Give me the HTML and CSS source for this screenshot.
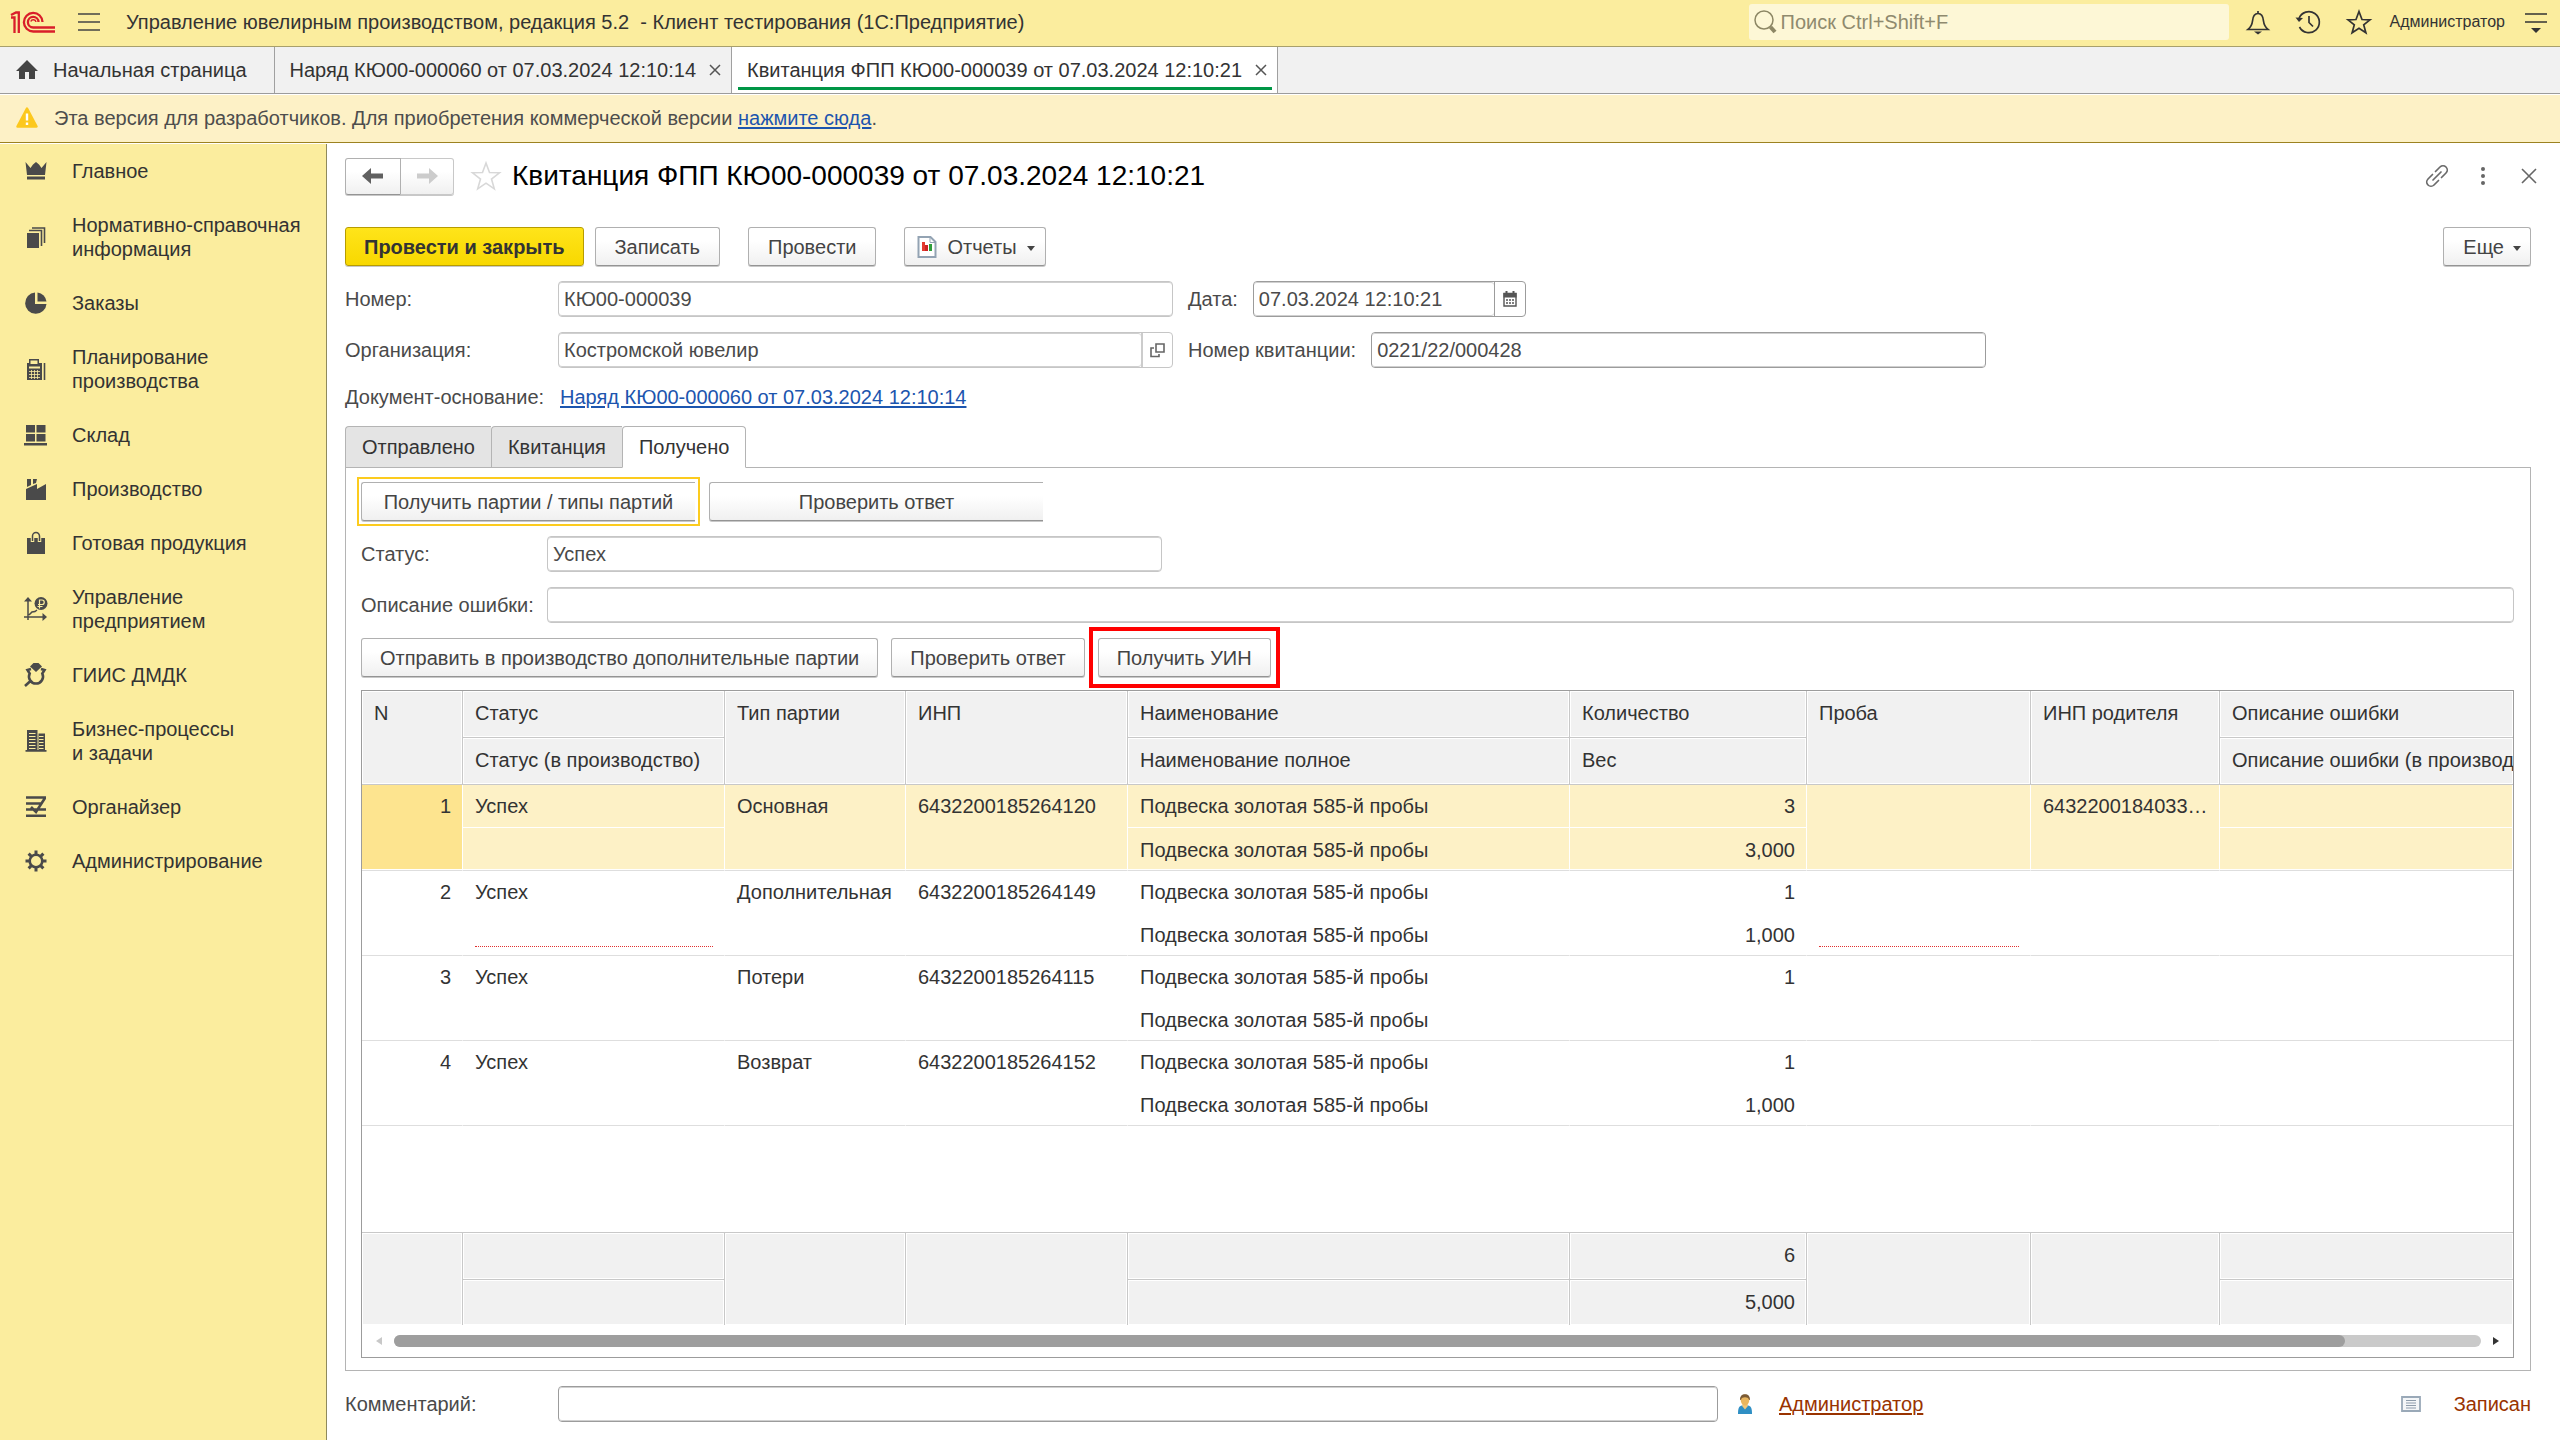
FILE: index.html
```html
<!DOCTYPE html>
<html lang="ru">
<head>
<meta charset="utf-8">
<title>Управление ювелирным производством, редакция 5.2</title>
<link rel="stylesheet" href="styles.css">
</head>
<body>
<header class="topbar">
  <svg class="logo" width="45" height="23" viewBox="0 0 45 23" fill="none" stroke="#d91e2a" stroke-width="2.300">
    <path d="M0 6.500h3.500V22M0 4L5 1.500h2.800V22" />
    <path d="M31.500 11a9.300 9.300 0 1 0-9.300 9.500H44M27.500 11a5.300 5.300 0 1 0-5.300 5.500H44" />
    <path d="M25 11a2.700 2.700 0 0 0-5.200-.5" stroke-width="1.500" />
  </svg>
  <button class="icon-btn burger" aria-label="Меню"><svg width="24" height="20" viewBox="0 0 24 20" stroke="#444" stroke-width="1.500"><path d="M1 2h22M1 10h22M1 18h22" /></svg></button>
  <span class="app-title">Управление ювелирным производством, редакция 5.2 &nbsp;- Клиент тестирования (1С:Предприятие)</span>
  <label class="search">
    <svg width="24" height="26" viewBox="0 0 24 26" fill="none" stroke="#8d8765"><circle cx="11" cy="11" r="9" stroke-width="1.500" /><path d="M17.500 18l4.500 5" stroke-width="4" /></svg>
    <input type="text" placeholder="Поиск Ctrl+Shift+F" aria-label="Поиск">
  </label>
  <div class="top-icons">
    <button class="icon-btn" aria-label="Уведомления"><svg width="24" height="26" viewBox="0 0 24 26" fill="none" stroke="#333" stroke-width="1.700"><path d="M12 2v2.500M2 20.500h20c-3-2.500-4-4-4.500-8.500-.4-4.500-2-7.500-5.500-7.500S6.900 7.500 6.500 12C6 16.500 5 18 2 20.500z" /><path d="M8 22.500h8l-4 3z" fill="#333" stroke="none" /></svg></button>
    <button class="icon-btn" aria-label="История"><svg width="26" height="26" viewBox="0 0 26 26" fill="none" stroke="#333" stroke-width="1.700"><path d="M4 9.500A10.500 10.500 0 1 1 4.500 18M14 7v6.500l4 4" /><path d="M.5 8.500l7.500.5-4 4z" fill="#333" stroke="none" /></svg></button>
    <button class="icon-btn" aria-label="Избранное"><svg width="26" height="26" viewBox="0 0 26 26" fill="none" stroke="#333" stroke-width="1.700"><path d="M13 2.500l3 8 8 .3-6.300 5 2.200 8L13 19.300l-6.900 4.500 2.200-8L2 10.800l8-.3z" /></svg></button>
  </div>
  <a class="user" href="#">Администратор</a>
  <button class="icon-btn" aria-label="Сервис"><svg width="24" height="22" viewBox="0 0 24 22" stroke="#333" stroke-width="1.700"><path d="M1 3h22M1 11h22" /><path d="M7 17h10l-5 5z" fill="#333" stroke="none" /></svg></button>
</header>

<nav class="tabs">
  <a class="tab home" href="#"><svg width="22" height="20" viewBox="0 0 22 20" fill="#444"><path d="M11 0L0 11h3v8h6v-7h4v7h6v-8h3z" /></svg>Начальная страница</a>
  <div class="tab"><a href="#">Наряд КЮ00-000060 от 07.03.2024 12:10:14</a><button class="icon-btn" aria-label="Закрыть"><svg width="12" height="12" viewBox="0 0 12 12" stroke="#555" stroke-width="1.500"><path d="M1 1l10 10M11 1L1 11" /></svg></button></div>
  <div class="tab active"><a href="#">Квитанция ФПП КЮ00-000039 от 07.03.2024 12:10:21</a><button class="icon-btn" aria-label="Закрыть"><svg width="12" height="12" viewBox="0 0 12 12" stroke="#555" stroke-width="1.500"><path d="M1 1l10 10M11 1L1 11" /></svg></button></div>
</nav>

<div class="notice">
  <svg width="22" height="21" viewBox="0 0 22 21"><path d="M11 1.500L20.500 19.500h-19z" fill="#fcc81e" stroke="#fcc81e" stroke-width="2.500" stroke-linejoin="round" /><path d="M11 6.500v7M11 15.500v2.500" stroke="#fff" stroke-width="2.400" /></svg>
  <p>Эта версия для разработчиков. Для приобретения коммерческой версии <a class="link" href="#">нажмите сюда</a>.</p>
</div>

<div class="workspace">
  <nav class="sidebar">
    <a href="#"><svg viewBox="0 0 24 24"><path d="M1.500 3l5 6L9 5.500 12 3l3 2.500L17.500 9l5-6L21 16H3zM3 17.500h18v3H3z" /></svg><span>Главное</span></a>
    <a href="#"><svg viewBox="0 0 24 24"><path d="M3 8h12v15H3z" /><path d="M5 5.500h12.500V21M8 3h12.500v15" fill="none" stroke="#4a4a4a" stroke-width="1.600" /></svg><span>Нормативно-справочная информация</span></a>
    <a href="#"><svg viewBox="0 0 24 24"><path d="M11 1.500V13h11.500A10.700 10.700 0 1 1 11 1.500z" /><path d="M13.500 1.500a10 10 0 0 1 9 9h-9z" /></svg><span>Заказы</span></a>
    <a href="#"><svg viewBox="0 0 24 24"><path d="M3 6h2V2h10v4h3v17H3zM6.500 3.500V7h7V3.500zM5 9.500v2h11v-2z" fill-rule="evenodd" /><path d="M5 14.500h11M5 17.500h11M5 20.500h11M7.500 13v9M10.500 13v9M13.500 13v9" stroke="#fbed9e" stroke-width=".8" /><path d="M20.500 6v17" stroke="#4a4a4a" stroke-width="1.600" /></svg><span>Планирование производства</span></a>
    <a href="#"><svg viewBox="0 0 24 24"><path d="M2 2h9v7.500H2zM12.500 2h9v7.500h-9zM2 11h9v7.500H2zM12.500 11h9v7.500h-9zM0 20h23v2.500H0z" /></svg><span>Склад</span></a>
    <a href="#"><svg viewBox="0 0 24 24"><path d="M2 12l11-5v5l9-5v16H2zM3 2h4v6l-4 2zM9 2h4l-1 4-3 1z" /></svg><span>Производство</span></a>
    <a href="#"><svg viewBox="0 0 24 24"><path d="M3 7h18v16H3z" /><path d="M8.500 11V5a3.500 3.500 0 0 1 7 0v6" fill="none" stroke="#fbed9e" stroke-width="3.500" /><path d="M8.500 10V5a3.500 3.500 0 0 1 7 0v5" fill="none" stroke="#4a4a4a" stroke-width="1.500" /></svg><span>Готовая продукция</span></a>
    <a href="#"><svg viewBox="0 0 24 24"><path d="M4 0l4 4.500H0zM23 20l-4.500-4v8z" /><circle cx="17" cy="6.500" r="6.500" /><path d="M4 3v20M0 20h20M5 18l3-3 3-.5 2-1.500" fill="none" stroke="#4a4a4a" stroke-width="1.500" /><path d="M15.500 11.500V3H18a2.200 2.200 0 0 1 0 4.500h-4M13.500 9.500h5" fill="none" stroke="#fbed9e" stroke-width="1.200" /></svg><span>Управление предприятием</span></a>
    <a href="#"><svg viewBox="0 0 24 24"><path d="M9.500 0h5L18 3.500 12 9 6 3.500z" /><path d="M7 6L3.500 7l2.200 3.500a7 7 0 1 0 12.600 0L20.500 7 17 6M7 17.500L1 23" fill="none" stroke="#4a4a4a" stroke-width="2.600" /></svg><span>ГИИС ДМДК</span></a>
    <a href="#"><svg viewBox="0 0 24 24"><path d="M3 1h10.500v21H3zM14.500 4.500H21V22h-6.500zM1.500 21h21v1.800h-21z" /><path d="M5 4.500h6.500M5 7.500h6.500M5 10.500h6.500M5 13.500h6.500M5 16.500h6.500M5 19.500h6.500M15 7.500h4.500M15 10.500h4.500M15 13.500h4.500M15 16.500h4.500M15 19.500h4.500" stroke="#fbed9e" stroke-width="1" /></svg><span>Бизнес-процессы и&nbsp;задачи</span></a>
    <a href="#"><svg viewBox="0 0 24 24"><path d="M2 2.500h20M2 8.500h15M2 14.500h20M2 20.800h20M21 3l-9 14-5-5" fill="none" stroke="#4a4a4a" stroke-width="2.600" /></svg><span>Органайзер</span></a>
    <a href="#"><svg viewBox="0 0 24 24"><circle cx="12" cy="12" r="6.300" fill="none" stroke="#4a4a4a" stroke-width="2.600" /><path d="M12 1.500v4M12 18.500v4M1.500 12h4M18.500 12h4M4.600 4.600l2.800 2.800M16.600 16.600l2.800 2.800M4.600 19.400l2.800-2.800M16.600 7.400l2.800-2.800" stroke="#4a4a4a" stroke-width="3" /></svg><span>Администрирование</span></a>
  </nav>

  <main class="doc">
    <div class="doc-head">
      <div class="nav-pair">
        <button class="btn" aria-label="Назад"><svg width="22" height="18" viewBox="0 0 22 18" fill="#606060"><path d="M9 1v5.500h12v5H9V17L0 9z" /></svg></button>
        <button class="btn forward" aria-label="Вперед"><svg width="22" height="18" viewBox="0 0 22 18" fill="#ccc"><path d="M13 1v5.500H1v5h12V17l9-8z" /></svg></button>
      </div>
      <button class="icon-btn fav" aria-label="В избранное"><svg width="30" height="30" viewBox="0 0 30 30" fill="none" stroke="#d8d8d8" stroke-width="1.600"><path d="M15 2l3.500 9.500 10 .3-8 6.200 2.800 9.800L15 22.200l-8.300 5.600L9.500 18l-8-6.200 10-.3z" /></svg></button>
      <h1>Квитанция ФПП КЮ00-000039 от 07.03.2024 12:10:21</h1>
      <div class="head-tools">
        <button class="icon-btn" aria-label="Ссылка"><svg width="24" height="24" viewBox="0 0 24 24" fill="none" stroke="#6a6a6a" stroke-width="1.700" stroke-linecap="round"><path d="M8 16l8-8M10.500 7.500l4.500-4.500a4.200 4.200 0 0 1 6 6L16.500 13.500M13.500 16.500L9 21a4.200 4.200 0 0 1-6-6L7.500 10.500" /></svg></button>
        <button class="icon-btn" aria-label="Действия"><svg width="24" height="24" viewBox="0 0 24 24" fill="#666"><circle cx="12" cy="5" r="2" /><circle cx="12" cy="12" r="2" /><circle cx="12" cy="19" r="2" /></svg></button>
        <button class="icon-btn close" aria-label="Закрыть"><svg width="16" height="16" viewBox="0 0 16 16" stroke="#666" stroke-width="1.600"><path d="M1 1l14 14M15 1L1 15" /></svg></button>
      </div>
    </div>

    <div class="commands">
      <button class="btn primary">Провести и закрыть</button>
      <button class="btn">Записать</button>
      <button class="btn spaced">Провести</button>
      <button class="btn spaced reports"><svg width="20" height="22" viewBox="0 0 20 22"><path d="M1.500 1h12l5 5v15h-17z" fill="#fff" stroke="#93a3b3" stroke-width="2" /><path d="M13 1v5.500h5" fill="none" stroke="#93a3b3" /><path d="M5 6h3v9H5z" fill="#e23b30" /><path d="M8 9h3v6H8z" fill="#c22" /><path d="M12 8h3v7h-3z" fill="#2f9e3c" /></svg>Отчеты<span class="caret"></span></button>
      <button class="btn more">Еще<span class="caret"></span></button>
    </div>

    <div class="field-row">
      <label class="lead" for="num">Номер:</label>
      <div class="field wide"><input id="num" type="text" value="КЮ00-000039" readonly></div>
      <label for="date">Дата:</label>
      <div class="field date edit"><input id="date" type="text" value="07.03.2024 12:10:21"><button aria-label="Календарь"><svg width="14" height="16" viewBox="0 0 14 16"><path d="M1 2.500h12V15H1z" fill="#fff" stroke="#555" stroke-width="1.400" /><path d="M.5 2h13v4.500H.5zM2.500 0h2v3h-2zM9.500 0h2v3h-2z" fill="#555" /><path d="M3 9h8M3 12h8" stroke="#555" stroke-width="1.600" stroke-dasharray="2 1" /></svg></button></div>
    </div>
    <div class="field-row">
      <label class="lead" for="org">Организация:</label>
      <div class="field wide"><input id="org" type="text" value="Костромской ювелир" readonly><button aria-label="Открыть"><svg width="15" height="15" viewBox="0 0 15 15" fill="none" stroke="#666" stroke-width="1.600"><path d="M6 1h8v8H6zM4 5H1v8.500h8V11" /></svg></button></div>
      <label for="rcp">Номер квитанции:</label>
      <div class="field wide edit"><input id="rcp" type="text" value="0221/22/000428"></div>
    </div>
    <div class="field-row base-doc">
      <span class="lead">Документ-основание:</span>
      <a class="link" href="#">Наряд КЮ00-000060 от 07.03.2024 12:10:14</a>
    </div>

    <section class="pages">
      <div class="page-tabs" role="tablist">
        <button role="tab">Отправлено</button>
        <button role="tab">Квитанция</button>
        <button role="tab" class="current" aria-selected="true">Получено</button>
      </div>
      <div class="page-body">
        <div class="line">
          <button class="btn half focused">Получить партии / типы партий</button>
          <button class="btn half">Проверить ответ</button>
        </div>
        <div class="field-row">
          <label class="lead" for="st">Статус:</label>
          <div class="field wide"><input id="st" type="text" value="Успех" readonly></div>
        </div>
        <div class="field-row">
          <label class="lead" for="err">Описание ошибки:</label>
          <div class="field full"><input id="err" type="text" readonly></div>
        </div>
        <div class="line">
          <button class="btn">Отправить в производство дополнительные партии</button>
          <button class="btn">Проверить ответ</button>
          <button class="btn marked">Получить УИН</button>
        </div>

        <div class="grid-box">
          <table>
            <colgroup><col class="c-n"><col class="c-status"><col class="c-type"><col class="c-inp"><col class="c-name"><col class="c-qty"><col class="c-probe"><col class="c-parent"><col></colgroup>
            <thead>
              <tr><th rowspan="2">N</th><th>Статус</th><th rowspan="2">Тип партии</th><th rowspan="2">ИНП</th><th>Наименование</th><th>Количество</th><th rowspan="2">Проба</th><th rowspan="2">ИНП родителя</th><th>Описание ошибки</th></tr>
              <tr><th>Статус (в производство)</th><th>Наименование полное</th><th>Вес</th><th>Описание ошибки (в производство)</th></tr>
            </thead>
            <tbody>
              <tr class="sel"><td class="num key" rowspan="2">1</td><td>Успех</td><td rowspan="2">Основная</td><td rowspan="2">6432200185264120</td><td>Подвеска золотая 585-й пробы</td><td class="num">3</td><td rowspan="2"></td><td rowspan="2">6432200184033…</td><td></td></tr>
              <tr class="sel sub"><td></td><td>Подвеска золотая 585-й пробы</td><td class="num">3,000</td><td></td></tr>
              <tr><td class="num" rowspan="2">2</td><td>Успех</td><td rowspan="2">Дополнительная</td><td rowspan="2">6432200185264149</td><td>Подвеска золотая 585-й пробы</td><td class="num">1</td><td class="required" rowspan="2"><span></span></td><td rowspan="2"></td><td></td></tr>
              <tr class="sub"><td class="required"><span></span></td><td>Подвеска золотая 585-й пробы</td><td class="num">1,000</td><td></td></tr>
              <tr><td class="num" rowspan="2">3</td><td>Успех</td><td rowspan="2">Потери</td><td rowspan="2">6432200185264115</td><td>Подвеска золотая 585-й пробы</td><td class="num">1</td><td rowspan="2"></td><td rowspan="2"></td><td></td></tr>
              <tr class="sub"><td></td><td>Подвеска золотая 585-й пробы</td><td class="num"></td><td></td></tr>
              <tr><td class="num" rowspan="2">4</td><td>Успех</td><td rowspan="2">Возврат</td><td rowspan="2">6432200185264152</td><td>Подвеска золотая 585-й пробы</td><td class="num">1</td><td rowspan="2"></td><td rowspan="2"></td><td></td></tr>
              <tr class="sub"><td></td><td>Подвеска золотая 585-й пробы</td><td class="num">1,000</td><td></td></tr>
              <tr class="blank"><td colspan="9"></td></tr>
            </tbody>
            <tfoot>
              <tr><td rowspan="2"></td><td></td><td rowspan="2"></td><td rowspan="2"></td><td></td><td class="num">6</td><td rowspan="2"></td><td rowspan="2"></td><td></td></tr>
              <tr class="last"><td></td><td></td><td class="num">5,000</td><td></td></tr>
            </tfoot>
          </table>
          <div class="scroll">
            <button class="icon-btn" aria-label="Влево"><svg width="6" height="8" viewBox="0 0 6 8" fill="#c8c8c8"><path d="M6 0v8L0 4z" /></svg></button>
            <div class="track"><div class="thumb"></div></div>
            <button class="icon-btn" aria-label="Вправо"><svg width="6" height="8" viewBox="0 0 6 8" fill="#333"><path d="M0 0v8l6-4z" /></svg></button>
          </div>
        </div>
      </div>
    </section>

    <div class="field-row bottom">
      <label class="lead" for="cmt">Комментарий:</label>
      <div class="field comment edit"><input id="cmt" type="text"></div>
      <svg class="person" width="16" height="20" viewBox="0 0 16 20"><path d="M1 20c0-6 1-8 4-8.500h6c3 .5 4 2.500 4 8.500z" fill="#2f8fc4" /><path d="M5.500 10h5v2.500L8 15.500l-2.500-3z" fill="#f3c777" /><ellipse cx="8" cy="6" rx="4.300" ry="5.500" fill="#e9b65e" /><path d="M3 6C3 2 5 .3 8 .3S13 2 13 6l-1-.2C11.500 4 10 3.300 8 3.300S4.500 4 4 5.800z" fill="#7b5a34" /></svg>
      <a class="author" href="#">Администратор</a>
      <svg class="state-icon" width="20" height="16" viewBox="0 0 20 16"><path d="M1 1h18v14H1z" fill="#f4f6f8" stroke="#9aa9b8" stroke-width="1.800" /><path d="M5 4.500h10M5 7h10M5 9.500h10M5 12h10" stroke="#8e9cab" stroke-width="1.200" /></svg>
      <span class="state">Записан</span>
    </div>
  </main>
</div>
</body>
</html>
```

FILE: styles.css
```css
* { box-sizing: border-box; }

body {
  margin: 0;
  min-height: 100vh;
  display: flex;
  flex-direction: column;
  background: #fff;
  color: #333;
  font: 20px/24px "Liberation Sans", Arial, sans-serif;
}

button, input { font: inherit; color: inherit; }
a { color: inherit; text-decoration: none; }
p, h1 { margin: 0; }
svg { display: block; flex: none; overflow: visible; }

.link { color: #1c55ae; text-decoration: underline; text-decoration-thickness: 2px; text-underline-offset: 2px; }

.icon-btn {
  display: flex;
  align-items: center;
  justify-content: center;
  padding: 0;
  border: 0;
  background: none;
}

/* Application bar */
.topbar {
  display: flex;
  align-items: center;
  height: 47px;
  padding: 0 12px 2px 11px;
  background: #fbed9e;
  border-bottom: 1px solid #a8a06c;
}
.burger { margin: 0 25px 0 21px; }
.app-title { flex: 1; white-space: nowrap; }
.search {
  display: flex;
  align-items: center;
  gap: 4px;
  width: 480px;
  height: 36px;
  padding: 0 4px;
  border-radius: 3px;
  background: #fdf7d6;
}
.search input {
  flex: 1;
  min-width: 0;
  padding: 0;
  border: 0;
  background: none;
}
.search input::placeholder { color: #8f8a6e; opacity: 1; }
.top-icons { display: flex; gap: 25px; margin: 0 18px 0 17px; }
.user { margin-right: 19px; font-size: 16px; }

/* Window tabs */
.tabs {
  display: flex;
  height: 47px;
  background: #f1f1f1;
  border-bottom: 1px solid #9c9c9c;
}
.tab {
  display: flex;
  align-items: center;
  gap: 13px;
  padding: 0 10px 0 15px;
  border-right: 1px solid #a0a0a0;
  white-space: nowrap;
}
.tab.home { gap: 15px; padding: 0 27px 0 16px; }
.tab.active {
  background: linear-gradient(#009646, #009646) center bottom 3px / calc(100% - 11px) 3px no-repeat #fff;
}

/* Developer notice */
.notice {
  display: flex;
  align-items: center;
  gap: 16px;
  height: 49px;
  padding: 0 16px 2px;
  border-top: 1px solid #fff;
  border-bottom: 1px solid #9c8220;
  background: #fdf1c6;
  color: #4d4d4d;
}

.workspace { display: flex; flex: 1; }

/* Sections */
.sidebar {
  flex: 0 0 327px;
  margin-top: 1px;
  background: #fbed9e;
  border-right: 1px solid #8f8a5c;
}
.sidebar a {
  display: flex;
  align-items: center;
  gap: 24px;
  padding: 15px 20px 15px 24px;
}
.sidebar svg { width: 24px; height: 24px; fill: #4a4a4a; }

/* Document form */
.doc {
  flex: 1;
  min-width: 0;
  display: flex;
  flex-direction: column;
  gap: 15px;
  padding: 15px 29px 18px 18px;
  color: #4a4a4a;
}
.doc-head { display: flex; align-items: center; height: 36px; margin-bottom: 18px; }
.doc-head h1 { color: #000; font-size: 28px; font-weight: 400; line-height: 34px; }
.nav-pair { display: flex; }
.nav-pair .btn { width: 56px; height: 37px; padding: 0; border-radius: 3px 0 0 3px; }
.nav-pair .forward { width: 53px; border-left: 0; border-color: #c8c8c8; border-radius: 0 3px 3px 0; }
.fav { margin: 0 11px 0 17px; }
.head-tools { display: flex; align-items: center; gap: 22px; margin: 0 -10px 0 auto; }
.head-tools .close { width: 24px; }

.btn {
  position: relative;
  display: flex;
  align-items: center;
  justify-content: center;
  height: 39px;
  padding: 0 19px;
  border: 1px solid #b0b0b0;
  border-bottom-color: #949494;
  border-radius: 3px;
  background: linear-gradient(#fff 35%, #f0f0f0);
  box-shadow: 0 1px 0 #c8c8c8;
  color: #444;
  white-space: nowrap;
}
.btn.primary {
  padding: 0 18px;
  border-color: #b79c00;
  background: linear-gradient(#ffe41a, #f8d800);
  color: #333;
  font-weight: 700;
}
.commands { display: flex; gap: 11px; }
.commands .spaced { margin-left: 17px; }
.commands .reports { gap: 10px; padding: 0 10px 0 12px; }
.commands .more { gap: 9px; margin-left: auto; padding: 0 9px 0 19px; }
.caret { margin-top: 4px; border: 4px solid transparent; border-top: 5px solid #444; border-bottom: 0; }

.field-row { display: flex; align-items: center; gap: 15px; min-height: 36px; white-space: nowrap; }
.field-row .lead { width: 198px; }
.base-doc { min-height: 28px; gap: 17px; }
.field {
  display: flex;
  height: 36px;
  border: 1px solid #c6c6c6;
  border-radius: 4px;
  background: #fff;
}
.field input {
  flex: 1;
  min-width: 0;
  padding: 0 5px;
  border: 0;
  border-radius: 3px;
  background: none;
  box-shadow: inset 0 1px #d0d0d0, inset 0 -1px #d0d0d0;
  outline: 0;
}
.field button {
  display: flex;
  align-items: center;
  justify-content: center;
  width: 31px;
  padding: 0;
  border: 0;
  border-left: 2px solid #ccc;
  background: none;
}
.field.edit { border-color: #9c9c9c; }
.field.edit button { border-left: 1px solid #9c9c9c; }
.field.wide { flex: 0 1 615px; }
.field.full { flex: 1; }
.field.date { flex: 0 1 273px; }
.field.comment { flex: 0 1 1160px; }
.field.date input { width: 240px; }

/* Form pages */
.page-tabs { display: flex; margin-bottom: -1px; }
.page-tabs button {
  position: relative;
  height: 42px;
  padding: 0 16px;
  border: 1px solid #b4b4b4;
  border-right: 0;
  border-radius: 4px 0 0 0;
  background: #e4e4e4;
  color: #333;
}
.page-tabs .current {
  border-right: 1px solid #b4b4b4;
  border-bottom-color: #fff;
  border-radius: 4px 4px 0 0;
  background: #fff;
}
.page-body {
  display: flex;
  flex-direction: column;
  gap: 15px;
  padding: 14px 16px 12px 15px;
  border: 1px solid #b4b4b4;
}
.page-body .field-row .lead { width: 171px; }
.line { display: flex; gap: 13px; }
.line .btn { padding: 0 18px; }
.line .half { width: 334px; border-right: 0; margin-right: 1px; border-radius: 3px 0 0 3px; }

/* Frames drawn round a button, over its surroundings */
.focused::after, .marked::after {
  content: "";
  position: absolute;
  inset: -6px -5px;
  border: 2px solid #fccb1e;
  pointer-events: none;
}
.marked::after { inset: -12px -10px; border: 4px solid #f00; }

/* Tabular part */
.grid-box {
  margin-top: -2px;
  border: 1px solid #9c9c9c;
  overflow: hidden;
  color: #333;
}
table { width: 100%; table-layout: fixed; border-collapse: separate; border-spacing: 0; }
.c-n { width: 101px; }
.c-status { width: 262px; }
.c-type { width: 181px; }
.c-inp { width: 222px; }
.c-name { width: 442px; }
.c-qty { width: 237px; }
.c-probe { width: 224px; }
.c-parent { width: 189px; }

th, td {
  overflow: hidden;
  padding: 9px 11px 0 12px;
  border: 0 solid #c8c8c8;
  font-weight: 400;
  text-align: left;
  vertical-align: top;
  white-space: nowrap;
}
th, tfoot td {
  height: 47px;
  padding-top: 10px;
  border-width: 0 1px 1px 0;
  background: #f1f1f1;
  box-shadow: inset 0 0 0 1px #fff;
}
th:last-child, tfoot td:last-child { border-right-width: 0; }
tbody td {
  height: 42px;
  border-right: 1px solid transparent;
}
tbody .sub td { height: 43px; padding-top: 10px; }
tbody .sub td, tbody td[rowspan] { border-bottom: 1px solid #dedede; }
.num { text-align: right; }

.sel td {
  height: 43px;
  border-right-color: #fff;
  border-bottom: 1px solid #fff;
  background: #fdf1c6;
}
.sel .key { background: #fde48f; }
.sel.sub td, .sel td[rowspan] { border-bottom-color: #dedede; box-shadow: inset 0 -1px #fff; }

td.required, tbody .sub td.required { vertical-align: bottom; padding-bottom: 8px; }
.required span { display: block; border-bottom: 1px dotted #e03030; }

tbody .blank td { height: 106px; border: 0; }
tfoot tr:first-child td { height: 48px; border-top-width: 1px; }
tfoot .last td { height: 45px; }
tfoot .last td, tfoot td[rowspan] { border-bottom-width: 0; }

.scroll { display: flex; align-items: center; gap: 12px; height: 32px; padding: 0 14px; }
.track { flex: 1; height: 12px; border-radius: 6px; background: #cacaca; }
.thumb { width: 93.5%; height: 12px; border-radius: 6px; background: #9e9e9e; }

/* Footer line */
.bottom .person { margin-left: 4px; }
.author { margin-left: 11px; color: #993300; text-decoration: underline; text-decoration-thickness: 2px; text-underline-offset: 2px; }
.state-icon { margin-left: auto; }
.state { margin-left: 18px; color: #993300; }
```
